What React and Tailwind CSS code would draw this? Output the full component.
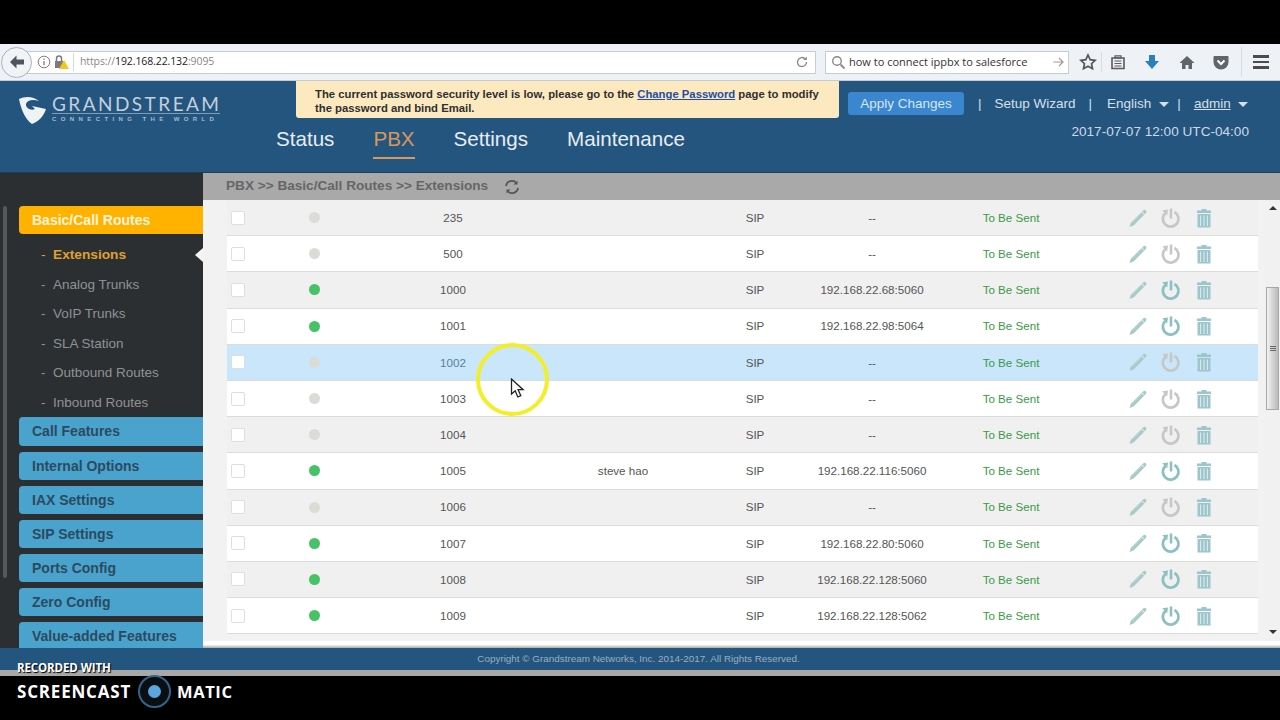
import React from 'react';

const rows = [
  { ext: '235', on: false, ip: '--' },
  { ext: '500', on: false, ip: '--' },
  { ext: '1000', on: true, ip: '192.168.22.68:5060' },
  { ext: '1001', on: true, ip: '192.168.22.98:5064' },
  { ext: '1002', on: false, ip: '--', hover: true },
  { ext: '1003', on: false, ip: '--' },
  { ext: '1004', on: false, ip: '--' },
  { ext: '1005', on: true, ip: '192.168.22.116:5060', name: 'steve hao' },
  { ext: '1006', on: false, ip: '--' },
  { ext: '1007', on: true, ip: '192.168.22.80:5060' },
  { ext: '1008', on: true, ip: '192.168.22.128:5060' },
  { ext: '1009', on: true, ip: '192.168.22.128:5062' },
];

const subItems = ['Analog Trunks', 'VoIP Trunks', 'SLA Station', 'Outbound Routes', 'Inbound Routes'];
const menuItems = ['Call Features', 'Internal Options', 'IAX Settings', 'SIP Settings', 'Ports Config', 'Zero Config', 'Value-added Features'];

const PencilIcon = () => (
  <svg width="22" height="22" viewBox="0 0 22 22" className="text-[#a9cbc8]">
    <path d="M2.500 20l1.300-4.300L16.300 3.300c.8-.8 1.900-.7 2.600 0s.8 1.800 0 2.600L6.600 18.600z" fill="currentColor" />
    <path d="M15 5.200l2.300 2.300" stroke="#fff" strokeWidth="0.800" fill="none" />
    <path d="M5 15.500l12-12" stroke="#fff" strokeWidth="0.500" opacity="0.500" fill="none" />
  </svg>
);

const PowerIcon = ({ on }) => (
  <svg width="22" height="22" viewBox="0 0 22 22" fill="none" className={on ? 'text-[#8cc0c2]' : 'text-[#c6c8c6]'}>
    <path d="M14.500 5a7.800 7.800 0 1 1-8.800 .8" stroke="currentColor" strokeWidth="2.700" />
    <path d="M11 1.500v10" stroke="currentColor" strokeWidth="2.600" />
    <path d="M2.300 3.300l5.700-.8-.8 6z" fill="currentColor" />
  </svg>
);

const TrashIcon = () => (
  <svg width="22" height="22" viewBox="0 0 22 22" className="text-[#9cc6cb]">
    <path d="M8.500 2h5v1.500H18V6H4V3.500h4.500z" fill="currentColor" />
    <path d="M4.500 7h13v13.500h-13z" fill="currentColor" />
    <path d="M7.600 8.500v10.500M11 8.500v10.500M14.400 8.500v10.500" stroke="#e8f2f3" strokeWidth="0.900" />
  </svg>
);

const Caret = () => <span className="inline-block w-0 h-0 border-x-[5px] border-x-transparent border-t-[5px] border-t-[#d5e0ea]" />;

const Toolbar = () => (
  <div className="h-[37px] bg-[#eef1f5] border-b border-[#c3ccd6] flex items-center font-['Open_Sans',sans-serif]">
    <div className="w-[810px] ml-[6px] h-[23px] bg-white border border-[#c5ccd4] rounded-l-full flex items-center relative">
      <div className="absolute -left-[6px] w-[31px] h-[31px] rounded-full bg-[#f1f3f6] border border-[#a9b2bc] flex items-center justify-center">
        <svg width="16" height="14" viewBox="0 0 16 14"><path d="M7.500 0.500L1 7l6.500 6.500V9.500H15v-5H7.500z" fill="#4d5660" /></svg>
      </div>
      <svg width="14" height="14" viewBox="0 0 14 14" fill="none" className="ml-[30px]">
        <circle cx="7" cy="7" r="5.800" stroke="#7e7e7e" />
        <path d="M7 6v4.200M7 3.500v1.400" stroke="#7e7e7e" strokeWidth="1.300" />
      </svg>
      <svg width="17" height="16" viewBox="0 0 17 16" className="ml-[2px]">
        <path d="M2 7h8v7H2z" fill="#7b7b7b" />
        <path d="M3.500 7V4.500a2.500 2.500 0 0 1 5 0V7" stroke="#7b7b7b" strokeWidth="1.500" fill="none" />
        <path d="M11 6l5 9H6z" fill="#f5c518" />
      </svg>
      <span className="w-px h-[18px] bg-[#d5d9de] ml-[3px]" />
      <span className="ml-[6px] text-[10.500px] text-[#888] tracking-[-0.1px]">
        https://<span className="text-[#222]">192.168.22.132</span>:9095
      </span>
      <svg width="14" height="14" viewBox="0 0 14 14" fill="none" className="ml-auto mr-[6px]">
        <path d="M11.500 7a4.500 4.500 0 1 1-1.500-3.300" stroke="#8a8a8a" strokeWidth="1.400" />
        <path d="M11.800 1.500v3.500H8.300z" fill="#8a8a8a" />
      </svg>
    </div>
    <div className="w-[244px] ml-[9px] h-[23px] bg-white border border-[#c5ccd4] flex items-center">
      <svg width="15" height="15" viewBox="0 0 15 15" fill="none" className="ml-[5px]">
        <circle cx="6" cy="6" r="4.300" stroke="#8a8a8a" strokeWidth="1.400" />
        <path d="M9.500 9.500l4 4" stroke="#8a8a8a" strokeWidth="1.800" />
      </svg>
      <span className="ml-[3px] text-[11px] text-[#333]">how to connect ippbx to salesforce</span>
      <svg width="11" height="10" viewBox="0 0 11 10" fill="none" className="ml-auto mr-[4px]">
        <path d="M0.500 5h9M6 1l4 4-4 4" stroke="#9a9a9a" strokeWidth="1.200" />
      </svg>
    </div>
    <svg width="18" height="18" viewBox="0 0 18 18" fill="none" className="ml-[10px]">
      <path d="M9 2l2.200 4.700 5 .6-3.700 3.400 1 5L9 13.200l-4.500 2.500 1-5L1.800 7.300l5-.6z" stroke="#555" strokeWidth="1.700" />
    </svg>
    <span className="w-px h-[20px] bg-[#d8dce0] ml-[4px]" />
    <svg width="16" height="16" viewBox="0 0 16 16" fill="none" className="ml-[8px]">
      <path d="M2 4h12v10.500H2z" stroke="#5a5a5a" strokeWidth="1.600" />
      <path d="M5 1.800h6V4H5zM4.500 7h7M4.500 9.500h7M4.500 12h7" stroke="#5a5a5a" strokeWidth="1.200" />
    </svg>
    <svg width="16" height="16" viewBox="0 0 16 16" className="ml-[18px]"><path d="M5 1h6v6h4l-7 8-7-8h4z" fill="#2a7fbd" /></svg>
    <svg width="16" height="15" viewBox="0 0 16 15" className="ml-[19px]">
      <path d="M8 1L0.500 8H3v6h3.500v-4h3v4H13V8h2.500z" fill="#5f6569" />
    </svg>
    <svg width="16" height="15" viewBox="0 0 16 15" className="ml-[18px]">
      <path d="M1.500 1h13c.8 0 1 .5 1 1v5a7.500 7.500 0 0 1-15 0V2c0-.5.2-1 1-1z" fill="#5f6569" />
      <path d="M4.500 5.500L8 9l3.500-3.500" stroke="#fff" strokeWidth="2" fill="none" />
    </svg>
    <span className="w-px h-[30px] bg-[#d8dce0] ml-[12px]" />
    <div className="ml-[11px] w-[16px] flex flex-col gap-[3px]">
      <span className="h-[2.500px] bg-[#4c4c4c]" />
      <span className="h-[2.500px] bg-[#4c4c4c]" />
      <span className="h-[2.500px] bg-[#4c4c4c]" />
    </div>
  </div>
);

const Logo = () => (
  <div className="w-[296px] pl-[18px] pt-[14px] flex items-start shrink-0">
    <svg width="30" height="30" viewBox="0 0 30 30">
      <path d="M1 4C7 1 15 1 21 6 15 4 9 5 8 9c-.5 4 5 7 9 5l-3-3 14 3c-2 7-8 13-14 15C8 25 3 15 1 4z" fill="#eef3f6" />
    </svg>
    <div className="ml-[4px] w-[168px] flex flex-col">
      <span className="text-[19px] leading-[17px] text-[#c3d0dc] tracking-[2.450px] whitespace-nowrap font-['Lato',sans-serif] font-normal">GRANDSTREAM</span>
      <span className="h-px bg-[#7f9db6] mt-[1px]" />
      <span className="text-[6px] leading-[10px] font-bold text-[#a9bccc] tracking-[4.400px] whitespace-nowrap font-['Liberation_Sans',sans-serif]">CONNECTING THE WORLD</span>
    </div>
  </div>
);

const Header = () => (
  <div className="h-[92px] bg-[#24557f] border-b border-[#1e3e58] shrink-0 font-['Liberation_Sans',sans-serif]">
    <div className="flex items-start h-[37px]">
      <Logo />
      <div className="w-[543px] h-[37px] bg-[#fde9c0] rounded-b-[3px] pl-[19px] pt-[6px] text-[11.300px] leading-[14px] font-bold text-[#2f2f2f] whitespace-nowrap">
        The current password security level is low, please go to the <span className="text-[#1f4fa0] underline">Change Password</span> page to modify
        <br />
        the password and bind Email.
      </div>
      <div className="ml-[9px] mt-[11px] w-[116px] h-[23px] bg-[#3a87cf] rounded-[3px] text-[13.500px] leading-[24px] text-center text-[#d7e6f3]">Apply Changes</div>
      <div className="ml-[14px] mt-[12px] h-[23px] flex items-center text-[13.500px] text-[#d5e0ea] whitespace-nowrap">
        <span>|</span>
        <span className="ml-[13px]">Setup Wizard</span>
        <span className="ml-[13px]">|</span>
        <span className="ml-[15px] -mt-[1px]">English</span>
        <span className="ml-[8px] -mt-[1px] flex"><Caret /></span>
        <span className="ml-[8px]">|</span>
        <span className="ml-[13px] underline">admin</span>
        <span className="ml-[7px] flex"><Caret /></span>
      </div>
    </div>
    <div className="flex items-start">
      <div className="ml-[276px] flex gap-[39px] text-[20.600px] text-[#e6edf3] pt-[9px]">
        <span className="leading-[24px]">Status</span>
        <span className="leading-[24px] h-[32px] border-b-2 border-[#d8985a] text-[#d8985a]">PBX</span>
        <span className="leading-[24px]">Settings</span>
        <span className="leading-[24px]">Maintenance</span>
      </div>
      <span className="ml-auto mr-[31px] pt-[6px] text-[13.600px] leading-[16px] text-[#cdd9e4]">2017-07-07 12:00 UTC-04:00</span>
    </div>
  </div>
);

const Sidebar = () => (
  <div className="w-[203px] shrink-0 bg-[#2c2f31] flex overflow-hidden relative font-['Liberation_Sans',sans-serif]">
    <div className="w-[19px] pl-[3px] pt-[33px] shrink-0">
      <div className="w-[4px] h-[372px] bg-[#55585a] rounded-sm" />
    </div>
    <div className="flex-1 pt-[33px] flex flex-col">
      <div className="h-[28px] bg-[#ffb300] rounded-l-[4px] pl-[13px] text-[14px] leading-[28px] font-bold text-[#fdf3d9] shrink-0">Basic/Call Routes</div>
      <div className="pt-[7px] shrink-0">
        <div className="h-[29.400px] flex items-center text-[13.700px] font-bold text-[#e0a030]">
          <span className="w-[34px] pl-[22px] font-normal">-</span>Extensions
        </div>
        {subItems.map(item => (
          <div key={item} className="h-[29.400px] flex items-center text-[13.500px] text-[#8f9294]">
            <span className="w-[34px] pl-[22px]">-</span>{item}
          </div>
        ))}
      </div>
      <div className="flex flex-col gap-[6px] shrink-0">
        {menuItems.map(item => (
          <div key={item} className="h-[28.200px] bg-[#4aa3cc] rounded-l-[4px] pl-[13px] text-[14px] leading-[28px] font-bold text-[#2b4a60]">{item}</div>
        ))}
      </div>
    </div>
    <span className="absolute right-0 top-[75px] w-0 h-0 border-y-[7px] border-y-transparent border-r-[8px] border-r-[#f4f4f4]" />
  </div>
);

const TableRow = ({ row, index }) => {
  const bg = row.hover ? 'bg-[#c9e6fa]' : index % 2 === 0 ? 'bg-[#f0f0f0]' : 'bg-white';
  return (
    <div className={`h-[36.200px] shrink-0 grid grid-cols-[22px_130px_148px_192px_72px_162px_116px_189px] items-center border-b border-[#dcdcdc] text-[11.600px] text-center text-[#555] ${bg}`}>
      <span className="justify-self-center w-[14px] h-[14px] bg-white border border-[#dedede] rounded-[2px]" />
      <span className={`justify-self-center w-[11px] h-[11px] rounded-full ${row.on ? 'bg-[#46c267]' : 'bg-[#dcdcd6]'}`} />
      <span className={row.hover ? 'text-[#5b7f96]' : ''}>{row.ext}</span>
      <span>{row.name}</span>
      <span>SIP</span>
      <span>{row.ip}</span>
      <span className="text-[#3a9a45]">To Be Sent</span>
      <div className="flex gap-[11px] pl-[58px]">
        <PencilIcon />
        <PowerIcon on={row.on} />
        <TrashIcon />
      </div>
    </div>
  );
};

const Scrollbar = () => (
  <div className="w-[15px] shrink-0 bg-[#f1f1f1] flex flex-col items-center">
    <span className="mt-[6px] w-0 h-0 border-x-[4px] border-x-transparent border-b-[4px] border-b-[#333]" />
    <div className="mt-[77px] w-[13px] h-[123px] bg-gradient-to-r from-[#f2f2f2] to-[#b9b9b9] border border-[#a8a8a8] flex flex-col items-center justify-center gap-[1px]">
      <span className="w-[6px] h-px bg-[#666]" />
      <span className="w-[6px] h-px bg-[#666]" />
      <span className="w-[6px] h-px bg-[#666]" />
    </div>
    <span className="mt-auto mb-[7px] w-0 h-0 border-x-[4px] border-x-transparent border-t-[4px] border-t-[#333]" />
  </div>
);

const Main = () => (
  <div className="flex-1 min-w-0 flex flex-col bg-white font-['Liberation_Sans',sans-serif]">
    <div className="h-[27px] shrink-0 bg-[#a9a9a9] flex items-center pl-[23px] text-[13.600px] font-bold text-[#666]">
      PBX &gt;&gt; Basic/Call Routes &gt;&gt; Extensions
      <svg width="16" height="16" viewBox="0 0 16 16" fill="none" className="ml-[16px]">
        <path d="M2 7a6 6 0 0 1 10.500-3M14 9a6 6 0 0 1-10.500 3" stroke="#555" strokeWidth="1.700" />
        <path d="M13.500 1.500v4h-4zM2.500 14.500v-4h4z" fill="#555" />
      </svg>
    </div>
    <div className="h-[441px] flex bg-[#f2f2f2] overflow-hidden shrink-0">
      <div className="w-[24px] shrink-0" />
      <div className="w-[1031px] shrink-0 flex flex-col overflow-hidden">
        {rows.map((row, i) => <TableRow key={row.ext} row={row} index={i} />)}
      </div>
      <div className="w-[7px] shrink-0" />
      <Scrollbar />
    </div>
    <div className="flex-1 bg-gradient-to-b from-white via-white to-[#a9a9a9]" />
  </div>
);

const Recorded = () => (
  <div className="absolute left-[17px] top-[660px] text-white font-['Open_Sans',sans-serif] font-bold">
    <div className="text-[11.500px] leading-[14px] mt-[1px] [text-shadow:1px_1px_1px_#000] tracking-[-0.1px]">RECORDED WITH</div>
    <div className="flex items-center text-[17px] leading-[32px] tracking-[0.800px]">
      SCREENCAST
      <span className="ml-[7px] mr-[6px] w-[33px] h-[33px] rounded-full border-2 border-[#33658c] bg-[#0b0f13] flex items-center justify-center">
        <span className="w-[13px] h-[13px] rounded-full bg-[#5ba6dc]" />
      </span>
      <span className="text-[16.500px] tracking-[0.600px]">MATIC</span>
    </div>
  </div>
);

export default function App() {
  return (
    <div className="relative w-[1280px] h-[720px] bg-black overflow-hidden flex flex-col">
      <div className="h-[44px] shrink-0" />
      <Toolbar />
      <Header />
      <div className="h-[475px] shrink-0 flex">
        <Sidebar />
        <Main />
      </div>
      <div className="h-[22px] shrink-0 bg-[#24557f] pr-[3px] text-center text-[9.900px] leading-[22px] text-[#98afc4] font-['Liberation_Sans',sans-serif]">
        Copyright © Grandstream Networks, Inc. 2014-2017. All Rights Reserved.
      </div>
      <div className="h-[6px] shrink-0 bg-[#a8a8a8]" />
      <Recorded />
      <div className="absolute left-[476px] top-[343px] w-[73px] h-[73px] rounded-full border-4 border-[#f2ef2a] blur-[0.5px]" />
      <svg width="16" height="22" viewBox="0 0 16 22" className="absolute left-[510px] top-[378px]">
        <path d="M1.500 1v15l3.700-3.200 2.600 6.200 3-1.300-2.700-6h5z" fill="#fff" stroke="#222" strokeWidth="1.300" />
      </svg>
    </div>
  );
}
